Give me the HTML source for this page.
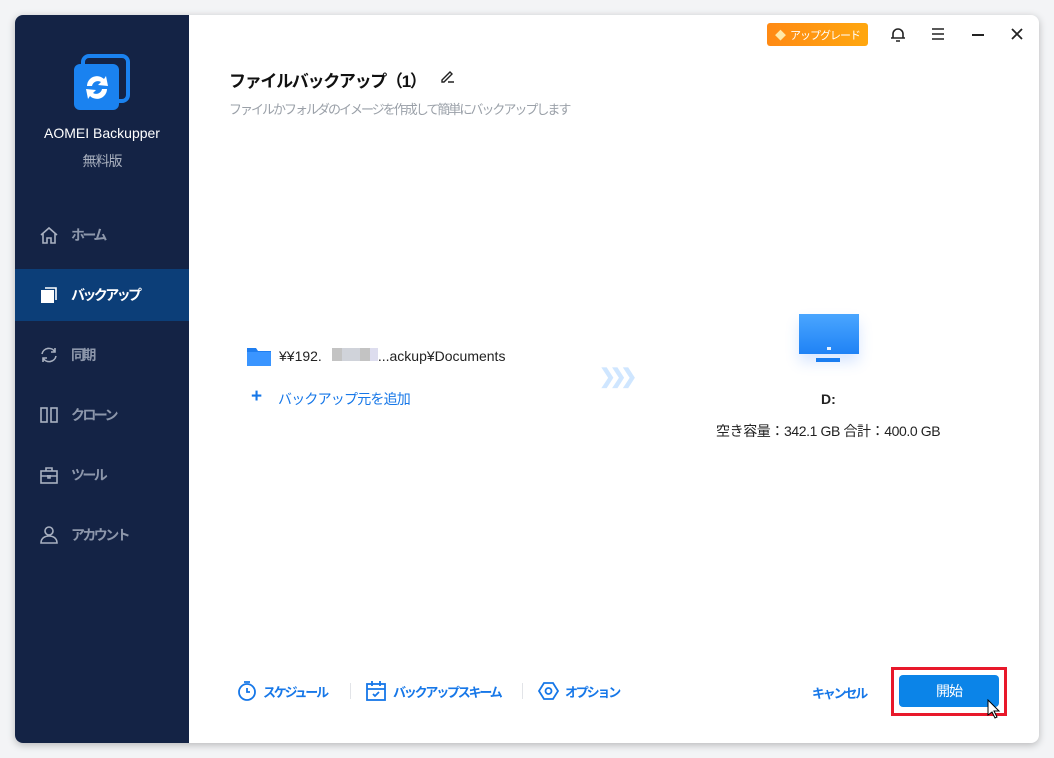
<!DOCTYPE html>
<html><head><meta charset="utf-8"><style>
*{margin:0;padding:0;box-sizing:border-box}
body{width:1054px;height:758px;background:#f3f4f6;font-family:"Liberation Sans","Noto Sans CJK JP",sans-serif;position:relative;overflow:hidden}
.win{position:absolute;left:15px;top:15px;width:1024px;height:728px;background:#fff;border-radius:8px;box-shadow:0 2px 8px rgba(0,0,0,.25);overflow:hidden}
.side{position:absolute;left:0;top:0;width:174px;height:728px;background:#142345}
.abs{position:absolute;white-space:nowrap}
.nav{position:absolute;left:0;width:174px;height:52px;color:#8d97ab;font-size:14px;font-weight:bold;display:flex;align-items:center;padding-left:24px;letter-spacing:-2.6px}
.nav svg{margin-right:12px}
.nav.act{background:#0c3e78;color:#fff}
.blue{color:#1677e8}
.bt{font-size:13px;font-weight:bold;letter-spacing:-2.2px}
</style></head><body>
<div class="win">
<div class="side">
  <svg class="abs" style="left:58px;top:38px" width="58" height="60" viewBox="0 0 58 60">
    <rect x="10" y="3" width="45" height="45" rx="6" fill="none" stroke="#1a82f0" stroke-width="4"/>
    <rect x="1" y="11" width="45" height="46" rx="6" fill="#1a82f0"/>
    <path d="M14 33a10 10 0 0 1 17-7l2-3 2 10-10-1 3-3a6 6 0 0 0-9 4z" fill="#fff"/>
    <path d="M34 36a10 10 0 0 1-17 7l-2 3-2-10 10 1-3 3a6 6 0 0 0 9-4z" fill="#fff"/>
  </svg>
  <div class="abs" style="left:0;width:174px;top:110px;text-align:center;color:#fff;font-size:14px">AOMEI Backupper</div>
  <div class="abs" style="left:0;width:174px;top:136px;text-align:center;color:#a9b0be;font-size:14px;letter-spacing:-1px">無料版</div>
  <div class="nav" style="top:194px"><svg width="20" height="20" viewBox="0 0 20 20" fill="none" stroke="#a8b0c0" stroke-width="1.6"><path d="M2 10L10 3l8 7M4 8v10h4v-5h4v5h4V8"/></svg>ホーム</div>
  <div class="nav act" style="top:254px"><svg width="20" height="20" viewBox="0 0 20 20"><rect x="2" y="5" width="13" height="13" fill="#fff"/><path d="M6 3h11v12" fill="none" stroke="#fff" stroke-width="1.6"/></svg>バックアップ</div>
  <div class="nav" style="top:314px"><svg width="20" height="20" viewBox="0 0 20 20" fill="none" stroke="#a8b0c0" stroke-width="1.6"><path d="M3 9a7 7 0 0 1 13-2M17 11a7 7 0 0 1-13 2M16 3v4h-4M4 17v-4h4"/></svg>同期</div>
  <div class="nav" style="top:374px"><svg width="20" height="20" viewBox="0 0 20 20" fill="none" stroke="#a8b0c0" stroke-width="1.6"><rect x="2" y="3" width="6" height="14"/><rect x="12" y="3" width="6" height="14"/></svg>クローン</div>
  <div class="nav" style="top:434px"><svg width="20" height="20" viewBox="0 0 20 20" fill="none" stroke="#a8b0c0" stroke-width="1.6"><rect x="2" y="6" width="16" height="12"/><path d="M7 6V3h6v3M2 11h16M9 10v3h2v-3"/></svg>ツール</div>
  <div class="nav" style="top:494px"><svg width="20" height="20" viewBox="0 0 20 20" fill="none" stroke="#a8b0c0" stroke-width="1.6"><circle cx="10" cy="6" r="4"/><path d="M2 18c0-5 4-7 8-7s8 2 8 7z"/></svg>アカウント</div>
</div>
<div class="abs" style="left:752px;top:8px;width:101px;height:23px;border-radius:3px;background:linear-gradient(90deg,#ff8a14,#ffa70f);color:#fff;font-size:11px;display:flex;align-items:center;padding-left:8px;letter-spacing:-1px"><span style="color:#ffe9a8;margin-right:5px">◆</span>アップグレード</div>
<svg class="abs" style="left:875px;top:11px" width="16" height="17" viewBox="0 0 16 17" fill="none" stroke="#222" stroke-width="1.6"><path d="M3 12V8a5 5 0 0 1 10 0v4M1 12h14M6 15h4"/></svg>
<svg class="abs" style="left:916px;top:13px" width="14" height="12" stroke="#222" stroke-width="1.6"><path d="M1 1h12M1 6h12M1 11h12"/></svg>
<svg class="abs" style="left:956px;top:19px" width="14" height="2" stroke="#222" stroke-width="2"><path d="M1 1h12"/></svg>
<svg class="abs" style="left:996px;top:13px" width="12" height="12" stroke="#222" stroke-width="1.8"><path d="M1 1l10 10M11 1L1 11"/></svg>
<div class="abs" style="left:214px;top:52px;font-size:17px;font-weight:bold;color:#111;letter-spacing:-1.3px">ファイルバックアップ（1）</div>
<svg class="abs" style="left:425px;top:54px" width="15" height="15" fill="none" stroke="#222" stroke-width="1.4"><path d="M2 11l8-8 2 2-8 8H2zM8 13h6"/></svg>
<div class="abs" style="left:214px;top:84px;font-size:13px;color:#9aa0a8;letter-spacing:-2px">ファイルかフォルダのイメージを作成して簡単にバックアップします</div>
<svg class="abs" style="left:232px;top:331px" width="24" height="20"><path d="M0 2h9l2 3h13v15H0z" fill="#1f7ef0"/><rect x="0" y="6" width="24" height="14" fill="#3a95ff"/></svg>
<div class="abs" style="left:264px;top:333px;font-size:14px;color:#222">¥¥192.<span style="display:inline-block;width:56px;height:13px;background:linear-gradient(90deg,#fff 0 10px,#c3c3c3 10px 20px,#d0d3da 20px 38px,#c3c3c3 38px 48px,#dde 48px)"></span>...ackup¥Documents</div>
<div class="abs blue" style="left:236px;top:371px;font-size:19px;font-weight:bold">+</div>
<div class="abs blue" style="left:263px;top:374px;font-size:14px;letter-spacing:-0.8px">バックアップ元を追加</div>
<div class="abs" style="left:584px;top:349px;font-size:20px;font-weight:bold;color:#cfe6ff;letter-spacing:-6px">❯❯❯</div>
<div class="abs" style="left:784px;top:299px;width:60px;height:40px;background:linear-gradient(#4aa6ff,#1f82f5);box-shadow:0 8px 14px rgba(60,130,255,.2)"></div>
<div class="abs" style="left:812px;top:332px;width:4px;height:3px;background:#e6f2ff"></div>
<div class="abs" style="left:801px;top:343px;width:24px;height:4px;background:#1a7df0"></div>
<div class="abs" style="left:806px;top:376px;font-size:14px;font-weight:bold;color:#222">D:</div>
<div class="abs" style="left:701px;top:406px;font-size:14px;color:#222;letter-spacing:-0.4px">空き容量：342.1 GB 合計：400.0 GB</div>
<svg class="abs" style="left:222px;top:665px" width="20" height="22" fill="none" stroke="#1677e8" stroke-width="1.8"><circle cx="10" cy="12" r="8"/><path d="M10 8v4h3M7 2h6"/></svg>
<div class="abs blue bt" style="left:248px;top:667px">スケジュール</div>
<div class="abs" style="left:335px;top:668px;width:1px;height:16px;background:#e2e4e8"></div>
<svg class="abs" style="left:351px;top:665px" width="20" height="21" fill="none" stroke="#1677e8" stroke-width="1.8"><rect x="1" y="4" width="18" height="16"/><path d="M1 9h18M6 1v5M14 1v5M7 14l2 2 4-4"/></svg>
<div class="abs blue bt" style="left:378px;top:667px">バックアップスキーム</div>
<div class="abs" style="left:507px;top:668px;width:1px;height:16px;background:#e2e4e8"></div>
<svg class="abs" style="left:523px;top:666px" width="21" height="20" fill="none" stroke="#1677e8" stroke-width="1.8"><path d="M6 2h9l5 8-5 8H6l-5-8z"/><circle cx="10.5" cy="10" r="3"/></svg>
<div class="abs blue bt" style="left:550px;top:667px">オプション</div>
<div class="abs blue bt" style="left:797px;top:668px">キャンセル</div>
<div class="abs" style="left:876px;top:652px;width:116px;height:49px;border:3px solid #e8182a"></div>
<div class="abs" style="left:884px;top:660px;width:100px;height:32px;border-radius:4px;background:#0b84e8;color:#fff;font-size:14px;display:flex;align-items:center;justify-content:center;letter-spacing:-1px">開始</div>
<svg class="abs" style="left:972px;top:684px" width="14" height="22"><path d="M1 1v15l4-3 3 6 2-1-3-6h5z" fill="#fff" stroke="#000" stroke-width="1"/></svg>
</div>
</body></html>
